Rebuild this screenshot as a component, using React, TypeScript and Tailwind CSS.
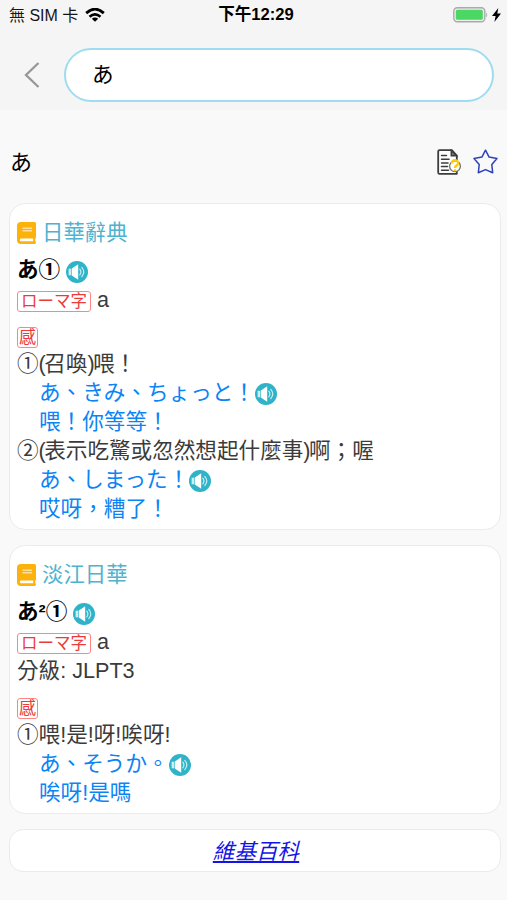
import React from 'react';

const dictionaries = [
  {
    name: '日華辭典',
    word: 'あ①',
    level: '',
    lines: [
      { kind: 'meaning', text: '①(召喚)喂！' },
      { kind: 'example', text: 'あ、きみ、ちょっと！', audio: true },
      { kind: 'example', text: '喂！你等等！' },
      { kind: 'meaning', text: '②(表示吃驚或忽然想起什麼事)啊；喔' },
      { kind: 'example', text: 'あ、しまった！', audio: true },
      { kind: 'example', text: '哎呀，糟了！' },
    ],
  },
  {
    name: '淡江日華',
    word: 'あ²①',
    level: '分級: JLPT3',
    lines: [
      { kind: 'meaning', text: '①喂!是!呀!唉呀!' },
      { kind: 'example', text: 'あ、そうか。', audio: true },
      { kind: 'example', text: '唉呀!是嗎' },
    ],
  },
] as { name: string; word: string; level: string; lines: { kind: string; text: string; audio?: boolean }[] }[];

function SpeakerIcon({ className = '' }: { className?: string }) {
  return (
    <svg viewBox="0 0 22 22" className={`w-[22px] h-[22px] shrink-0 ${className}`}>
      <circle cx="11" cy="11" r="11" fill="#2fb3c8" />
      <path d="M2.6 7.7h2.6v6.6H2.6z" fill="#c9eef3" />
      <path d="M5.8 7.6l6.4-4.4v15.6l-6.4-4.4z" fill="#fff" />
      <path d="M13.8 8.2q2.2 2.8 0 5.6M15.8 6.4q4 4.6 0 9.2" fill="none" stroke="#c9eef3" strokeWidth="1.2" strokeLinecap="round" />
    </svg>
  );
}

function BookIcon() {
  return (
    <svg viewBox="0 0 19 22" className="w-[19px] h-[22px] shrink-0">
      <path d="M4 0h13.5Q19 0 19 1.5v13.7q0 .8-.6 1.2-.5 1.5 0 3 .6.3.6 1v.2Q19 22 17.5 22H4Q0 22 0 18V4Q0 0 4 0z" fill="#fdb10b" />
      <path d="M4.2 16.5h12v2.8h-12q-1.4 0-1.4-1.4t1.4-1.4z" fill="#fff" />
      <path d="M5.5 6.2h9.5M5.5 8.8h9.5" stroke="#ffe09a" strokeWidth="1.6" />
    </svg>
  );
}

function NoteIcon() {
  return (
    <svg viewBox="0 0 24 26" className="w-6 h-[26px]" fill="none">
      <path d="M2.6 1.2h12.2l5 5.3v18.3H2.6q-1.4 0-1.4-1.4V2.6q0-1.4 1.4-1.4z" fill="#fff" stroke="#3d3d3d" strokeWidth="1.8" strokeLinejoin="round" />
      <path d="M14.3 1.5v5.2h5.2z" fill="#777" stroke="#3d3d3d" strokeWidth="1.5" />
      <path d="M4.5 6.5h5M4.5 10.2h7.5M4.5 13.9h6.5M4.5 17.6h6M4.5 21.2h7" stroke="#3d3d3d" strokeWidth="1.5" strokeLinecap="round" />
      <circle cx="18" cy="17.3" r="5.4" fill="#fff" stroke="#77746b" strokeWidth="1.3" />
      <path d="M15 14.3q.2-3.2 3.2-3 3.2.4 2.8 3.2-.3 1.6-1.8 2.3-1.2.6-1.2 2.2" stroke="#ffcc12" strokeWidth="2.4" />
      <circle cx="18" cy="21.2" r="1.2" fill="#ffcc12" />
    </svg>
  );
}

function StatusBar() {
  return (
    <div className="grid grid-cols-3 items-center h-[30px] pl-[9px] pr-[6px] text-[16px] text-[#151515]">
      <div className="flex items-center">
        <span className="whitespace-nowrap pt-px">無 SIM 卡</span>
        <svg viewBox="0 0 20 14" className="w-5 h-[14px] ml-[7px]" fill="none" stroke="#000">
          <path d="M1.2 5.1Q10-2.8 18.8 5.1" strokeWidth="2.8" />
          <path d="M4.5 8.7q5.5-4.7 11 0" strokeWidth="2.6" />
          <path d="M10 13.7L6.8 10.7q3.2-2.4 6.4 0z" fill="#000" stroke="none" />
        </svg>
      </div>
      <div className="text-center font-bold text-[16.6px] text-black whitespace-nowrap pt-px pl-[2px]">下午12:29</div>
      <div className="flex items-center justify-end">
        <svg viewBox="0 0 36 16" className="w-9 h-4">
          <rect x="0.8" y="0.8" width="31" height="14" rx="3.5" fill="#ececec" stroke="#aaa" strokeWidth="1.4" />
          <rect x="2.8" y="2.8" width="27" height="10" rx="1.6" fill="#4bd763" />
          <path d="M33.2 5.2q2 2.6 0 5.2z" fill="#aaa" />
        </svg>
        <svg viewBox="0 0 9 14" className="w-[9px] h-[14px] ml-[3px]">
          <path d="M6.3 0L0 8h3.6L2.4 14 9 5.6H5.3z" fill="#000" />
        </svg>
      </div>
    </div>
  );
}

function Tag({ children, className }: { children: React.ReactNode; className: string }) {
  return (
    <span className={`flex items-center justify-center rounded-[3px] border-[1.5px] border-[#ff8585] text-[#ec3a3a] leading-none whitespace-nowrap ${className}`}>
      {children}
    </span>
  );
}

// half-width parentheses sit tight against the characters around them
function LineText({ text }: { text: string }) {
  return (
    <span className="whitespace-nowrap">
      {text.split(/([()])/).map((part, i) =>
        part === '(' || part === ')' ? (
          <span key={i} className="tracking-[-1.6px]">{part}</span>
        ) : (
          part
        )
      )}
    </span>
  );
}

function DictionaryCard({ entry }: { entry: (typeof dictionaries)[number] }) {
  return (
    <section className="rounded-[16px] border border-[#ebebeb] bg-white px-[7px] pt-[10px] pb-[5px] text-[21.6px] text-[#3b3b3b]">
      <div className="flex items-center h-[38px] text-[#4fb3cf]">
        <BookIcon />
        <span className="ml-[6px] text-[21.4px]">{entry.name}</span>
      </div>
      <div className="flex items-center h-9 font-bold text-black">
        <span>{entry.word}</span>
        <SpeakerIcon className="ml-[6px] mt-[3px]" />
      </div>
      <div className="flex items-center h-[26px]">
        <Tag className="w-[74px] h-[21px] text-[16.5px]">ローマ字</Tag>
        <span className="ml-[6px] -mt-[2px]">a</span>
      </div>
      {entry.level && <div className="h-[29px] leading-[29px]">{entry.level}</div>}
      <div className="flex items-center h-[26px] mt-[10px]">
        <Tag className="w-[21px] h-[21px] text-[17px]">感</Tag>
      </div>
      {entry.lines.map((line) => (
        <div
          key={line.text}
          className={line.kind === 'example' ? 'flex items-center h-[29px] pl-[22px] text-[#0b84f5]' : 'flex items-center h-[29px]'}
        >
          <LineText text={line.text} />
          {line.audio && <SpeakerIcon className="mt-px" />}
        </div>
      ))}
    </section>
  );
}

export default function App() {
  return (
    <div lang="zh-Hant" className="flex flex-col w-full h-[900px] overflow-hidden bg-[#f9f9f9] font-['Liberation_Sans','Noto_Sans_CJK_TC',sans-serif]">
      <header className="h-[110px] bg-[#f5f5f5]">
        <StatusBar />
        <div className="flex items-center pt-[18px] pl-6 pr-[13px]">
          <svg viewBox="0 0 16 26" className="w-4 h-[26px] mr-6" fill="none" stroke="#979797" strokeWidth="2.3">
            <path d="M14.5 1L2 13l12.5 12" />
          </svg>
          <div className="flex-1 flex items-center h-[54px] rounded-full border-2 border-[#9fdcf0] bg-white pl-[26px] text-[21.6px] text-black">
            あ
          </div>
        </div>
      </header>

      <div className="flex items-center justify-between h-[93px] pt-[10px] pl-[10px] pr-[9px]">
        <h1 className="text-[22px] text-black pt-px">あ</h1>
        <div className="flex items-center gap-3">
          <NoteIcon />
          <svg viewBox="0 0 25 25" className="w-[25px] h-[25px]" fill="none" stroke="#2e43ba" strokeWidth="1.5" strokeLinejoin="round">
            <path d="M12.5 1.2l3.6 6.9 7.9 1.5-5.2 6 .9 8.2-7.2-3.2-7.2 3.2.9-8.2-5.2-6 7.9-1.5z" />
          </svg>
        </div>
      </div>

      <main className="flex flex-col gap-[15px] pl-[9px] pr-[6px]">
        {dictionaries.map((entry) => (
          <DictionaryCard key={entry.name} entry={entry} />
        ))}
        <section className="flex items-center justify-center h-[43px] rounded-[14px] border border-[#ebebeb] bg-white pt-[3px] pl-[2px]">
          <a href="#wiki" className="text-[21.6px] italic underline text-[#1414e6]">維基百科</a>
        </section>
      </main>
    </div>
  );
}
